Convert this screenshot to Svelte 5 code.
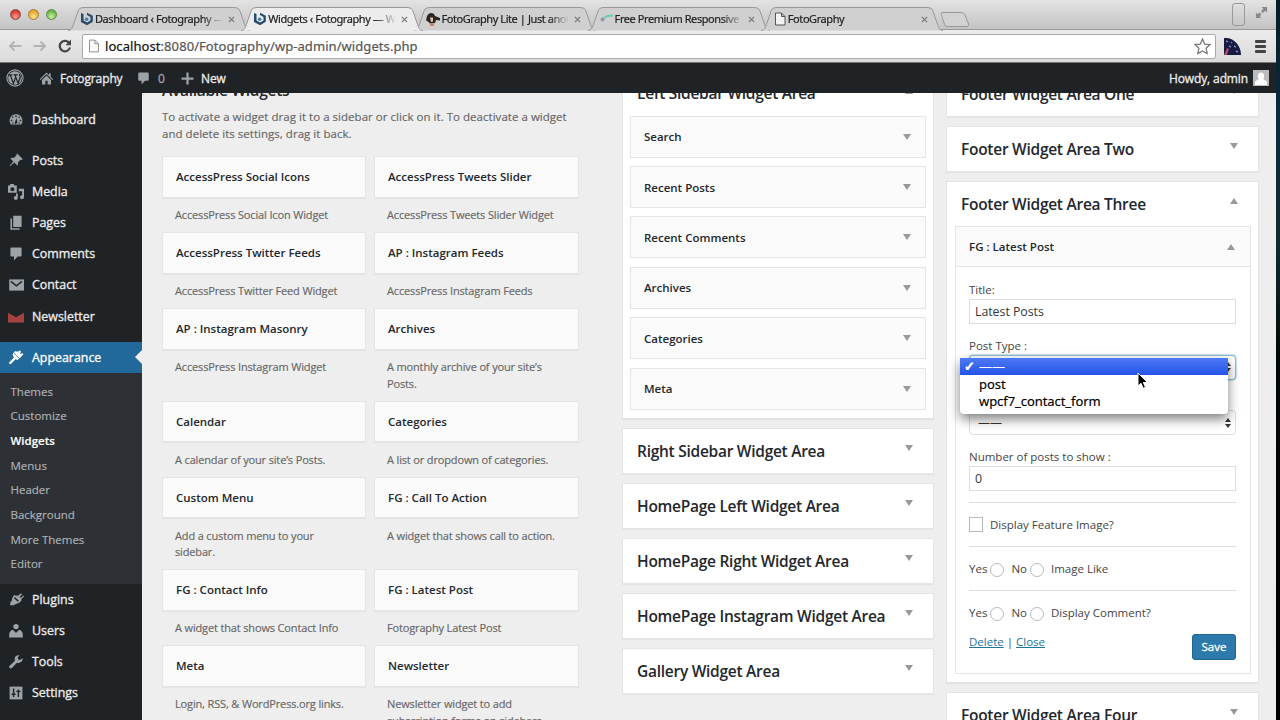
<script lang="ts">
	// Widgets screen of the WordPress admin, inside its browser window.
	const tabs = [
		{ title: 'Dashboard ‹ Fotography — W', icon: 'bit' },
		{ title: 'Widgets ‹ Fotography — Wo', icon: 'bit', active: true },
		{ title: 'FotoGraphy Lite | Just anot', icon: 'mascot' },
		{ title: 'Free Premium Responsive W', icon: 'key' },
		{ title: 'FotoGraphy', icon: 'page' }
	];

	const menuTop = ['Posts', 'Media', 'Pages', 'Comments', 'Contact', 'Newsletter'];
	const menuBottom = ['Plugins', 'Users', 'Tools', 'Settings'];
	const submenu = ['Themes', 'Customize', 'Widgets', 'Menus', 'Header', 'Background', 'More Themes', 'Editor'];

	const available = [
		['AccessPress Social Icons', 'AccessPress Social Icon Widget'],
		['AccessPress Tweets Slider', 'AccessPress Tweets Slider Widget'],
		['AccessPress Twitter Feeds', 'AccessPress Twitter Feed Widget'],
		['AP : Instagram Feeds', 'AccessPress Instagram Feeds'],
		['AP : Instagram Masonry', 'AccessPress Instagram Widget'],
		['Archives', 'A monthly archive of your site’s\nPosts.'],
		['Calendar', 'A calendar of your site’s Posts.'],
		['Categories', 'A list or dropdown of categories.'],
		['Custom Menu', 'Add a custom menu to your\nsidebar.'],
		['FG : Call To Action', 'A widget that shows call to action.'],
		['FG : Contact Info', 'A widget that shows Contact Info'],
		['FG : Latest Post', 'Fotography Latest Post'],
		['Meta', 'Login, RSS, & WordPress.org links.'],
		['Newsletter', 'Newsletter widget to add\nsubscription forms on sidebars']
	];

	const sidebarWidgets = ['Search', 'Recent Posts', 'Recent Comments', 'Archives', 'Categories', 'Meta'];
	const closedAreas = [
		'Right Sidebar Widget Area',
		'HomePage Left Widget Area',
		'HomePage Right Widget Area',
		'HomePage Instagram Widget Area',
		'Gallery Widget Area'
	];

	let title = $state('Latest Posts');
	let count = $state('0');
	let postType = $state('——');
	let menuOpen = $state(true);
	const postTypes = ['——', 'post', 'wpcf7_contact_form'];

	function pick(type: string) {
		postType = type;
		menuOpen = false;
	}
</script>

{#snippet icon(name: string)}
	<svg class="icon" viewBox="0 0 20 20" aria-hidden="true">
		{#if name === 'Dashboard'}
			<path d="M3.8 17h12.4c1.1-1.3 1.8-3 1.8-5 0-4.600-3.600-8-8-8s-8 3.500-8 8c0 2 .7 3.700 1.800 5z" />
			<path class="cut" d="M9 5.500h2v2H9zM5 7l1.600-.5.3 1.700-1.600.4zM3.500 11h2v1.800h-2zM14.500 11h2v1.800h-2zM13.600 6.700l1.400 1-1 1.500-1.200-.9zM10.800 9.500l1 4.500c.2 2-3.600 2-3.300 0l2-4.500zM5 14.500h2v1H5zM13 14.500h2v1h-2z" />
		{:else if name === 'Posts'}
			<path d="M10.400 3l1-1 6.900 6.900-1 1-1.800-.3-3.200 3.400c.5 1.500.4 2.900-.6 4L7.900 13.200 2.500 17.900 1.800 17.500 6.600 11.800 3 8.100c1.200-1 2.800-1.100 4.100-.6l3.500-3.100z" />
		{:else if name === 'Media'}
			<path fill-rule="evenodd" d="M0 2h2l1-2h4l1 2h3v9H0zM5.500 4a2.600 2.600 0 1 0 0 5.200 2.600 2.600 0 0 0 0-5.200zM13.500 6H20v10.500a2.500 2.500 0 1 1-2.300-2.500V9h-4.200zM10 12h2.200v5.500A2.500 2.500 0 1 1 10 15z" />
		{:else if name === 'Pages'}
			<path d="M6.500 1H17v14H6.500zM3 4.500h2v12h9.500v2H3z" />
		{:else if name === 'Comments'}
			<path d="M4.500 2h11A1.500 1.500 0 0 1 17 3.500v8a1.500 1.500 0 0 1-1.500 1.500H12l-4.500 5v-5h-3A1.500 1.500 0 0 1 3 11.500v-8A1.500 1.500 0 0 1 4.500 2z" />
		{:else if name === 'Contact'}
			<path d="M1.500 3H20v14H1.500z" />
			<path class="line" d="M3.500 5.500l7 5.500 7-5.500" />
		{:else if name === 'Newsletter'}
			<path fill="#a5423f" d="M0 6l10 5.500L20 6v12H0z" />
		{:else if name === 'Appearance'}
			<path d="M14.500 11.500L7 4.100 8.400 3c1.400-.9 3.500.9 5-.2l1.300-1.100 1.600 1.600-1.400 2 1.300.8 1.700-1 1.400 1.400-4.600 5zM6.500 4.600l7.400 7.400-1.700 1.700-2.700-.8-5.500 5.500c-.7.7-1.500.7-2.200 0s-.7-1.500 0-2.200l5.500-5.400-1.500-4z" />
		{:else if name === 'Plugins'}
			<path d="M13.100 4.400L16 1.500l1.500 1.500-2.900 2.900 1.400 1.500 3-3 1 1.200-3.500 3.600.5.900c-1.100 2.700-4.300 4.700-6.500 4.500L7 16.500H2.500l.7-4L5 10.500c-.2-2.800 1-5 3.500-7l1 1.200z" />
			<path class="line" d="M8 7l5 4.500" />
		{:else if name === 'Users'}
			<circle cx="10" cy="4.500" r="3.300" />
			<path d="M6 8.500l4 4 4-4c2.500.5 4.500 3 4.500 6V18h-17v-3.500c0-3 2-5.500 4.500-6z" />
		{:else if name === 'Tools'}
			<path d="M16.700 9.800c-1.500 1.400-3.600 1.800-5.400 1.100l-6.500 6.600c-.8.800-2 .8-2.700 0-.8-.7-.8-2 0-2.700l6.600-6.500C8 6.400 8.300 4.300 9.700 2.900c1.300-1.300 3.200-1.800 4.900-1.200l-2.500 2.700.8 2.500 2.400.7 2.700-2.500c.6 1.600.1 3.400-1.300 4.700z" />
		{:else if name === 'Settings'}
			<path d="M2 2h16v16H2z" />
			<path class="line" d="M7 4.500V15M4.500 11.500h5M13 5.500V15M10.500 8h5" />
		{:else if name === 'Home'}
			<path d="M10 2l3.500 3.500V3h2v4.500L19 11l-1 1-8-8-8 8-1-1zM4 12l6-6 6 6v6h-4.500v-5h-3v5H4z" />
		{:else if name === 'New'}
			<path d="M8.500 2h3v6.500H18v3h-6.500V18h-3v-6.500H2v-3h6.500z" />
		{/if}
	</svg>
{/snippet}

{#snippet favicon(name: string)}
	<svg class="favicon" viewBox="0 0 14 14" aria-hidden="true">
		{#if name === 'bit'}
			<path d="M1 1l2.500 1v6.500l3.500 2 3.500-2V5L7 3V.8l5.800 3v6L7 13.300 1 10z" fill="#274a6b" />
			<circle cx="6.600" cy="7.300" r="1.800" fill="#3981b5" />
		{:else if name === 'mascot'}
			<path d="M1 4C3 0 8 0 9 4l5 2v2.500l-4-.5-1 3-5 .5-2-2-2-1z" fill="#2c2420" />
			<path d="M4 5.500h3v4l-2 .5z" fill="#d9c4ae" />
			<path d="M4 11.500h4V14H4z" fill="#b88a72" />
		{:else if name === 'key'}
			<circle cx="2.500" cy="7.500" r="2" fill="#8d9ba0" />
			<path d="M4 6l3.500-2 5.500-.5" fill="none" stroke="#69c9b7" stroke-width="1.800" />
		{:else}
			<path d="M2.500 1h6l3.500 3.500V13H2.500zM8.500 1v3.500H12" fill="#f2f2f2" stroke="#555" />
		{/if}
	</svg>
{/snippet}

{#snippet areaHead(name: string, up = false)}
	<div class="area-head">
		<h3>{name}</h3>
		<span class="arrow" class:up></span>
	</div>
{/snippet}

<div class="desktop">
	<div class="window">
		<header class="tabstrip">
			<div class="lights"><i class="red"></i><i class="yellow"></i><i class="green"></i></div>
			<div class="tabs">
				{#each tabs as tab}
					<div class="tab" class:active={tab.active}>
						<svg class="shape" viewBox="0 0 182 24" aria-hidden="true">
							<path d="M0 23.500C4 23 4 21 6 16L10 4Q11 .5 15 .5H167Q171 .5 172 4L176 16C178 21 178 23 182 23.500" />
						</svg>
						{@render favicon(tab.icon)}
						<span class="tab-title">{tab.title}</span>
						<svg class="close" viewBox="0 0 8 8"><path d="M1 1l6 6M7 1L1 7" /></svg>
					</div>
				{/each}
				<svg class="newtab" viewBox="0 0 30 15"><path d="M1 1.500Q1 .5 3 .5H21Q24 .5 25 3L28.500 12Q29 14.500 27 14.500H8Q5 14.500 4.500 12.500z" /></svg>
			</div>
			<span class="profile"></span>
			<svg class="expand" viewBox="0 0 14 14"><path d="M7 1h6v6l-2-2-2.500 2.500-2-2L9 3zM1 7l2 2 2-2 2 2-2 2 2 2H1z" /></svg>
		</header>

		<div class="toolbar">
			<svg class="nav" viewBox="0 0 14 12"><path d="M13.500 6H2M6.500 1.500L2 6l4.500 4.500" /></svg>
			<svg class="nav" viewBox="0 0 14 12"><path d="M.5 6H12M7.500 1.500L12 6l-4.500 4.500" /></svg>
			<svg class="reload" viewBox="0 0 14 14"><path d="M11.500 4.500A5.200 5.200 0 1 0 12 8.500" /><path class="head" d="M13 .5v5.800H7.500z" /></svg>
			<div class="omnibox">
				<svg class="doc" viewBox="0 0 11 14"><path d="M.5.5h6l4 4v9H.5zM6.500.5v4h4" /></svg>
				<span class="url"><b>localhost</b>:8080/Fotography/wp-admin/widgets.php</span>
				<svg class="star" viewBox="0 0 16 16"><path d="M8 1l2.100 4.700 5 .5-3.700 3.500 1 5L8 12.200l-4.400 2.500 1-5L.9 6.200l5-.5z" /></svg>
			</div>
			<svg class="extension" viewBox="0 0 17 17">
				<path d="M0 0C9-1 17 7 17 17H0z" fill="#171b42" />
				<path d="M2 3l2 1M7 4l1 1M10 8l2 1M5 8l2 1M12 13l2 1" stroke="#6f84c8" stroke-width="1.500" />
				<path d="M0 17l3-7 2 1-2 6z" fill="#b4456b" />
			</svg>
			<div class="burger"><i></i><i></i><i></i></div>
		</div>

		<nav class="adminbar">
			<svg class="wp" viewBox="0 0 20 20">
				<circle class="ring" cx="10" cy="10" r="9" />
				<circle cx="10" cy="10" r="7.600" />
				<path d="M2.500 6.500h4.500M8.500 6.500h4.500M4.700 6.500l3.500 9.500 2.600-7M9.900 6.500l3.600 9.500 2.200-6.500c.4-1.500-.8-2.500-.8-4" />
			</svg>
			<span class="home">{@render icon('Home')}</span>
			<span class="site">Fotography</span>
			<span class="bubble">{@render icon('Comments')}</span>
			<span class="zero">0</span>
			<span class="plus">{@render icon('New')}</span>
			<span>New</span>
			<span class="howdy">Howdy, admin</span>
			<svg class="avatar" viewBox="0 0 16 16">
				<path class="back" d="M0 0h16v16H0z" />
				<path d="M8 2.500a3.300 3.700 0 0 1 2.200 6.400L14 11.500V15H2v-3.500l3.800-2.600A3.300 3.700 0 0 1 8 2.500z" />
			</svg>
		</nav>

		<div class="body">
			<aside class="menu">
				<div class="item">{@render icon('Dashboard')}Dashboard</div>
				<div class="separator"></div>
				{#each menuTop as name}
					<div class="item">{@render icon(name)}{name}</div>
				{/each}
				<div class="separator"></div>
				<div class="item current">{@render icon('Appearance')}Appearance</div>
				<ul>
					{#each submenu as name}
						<li class:on={name === 'Widgets'}>{name}</li>
					{/each}
				</ul>
				{#each menuBottom as name}
					<div class="item">{@render icon(name)}{name}</div>
				{/each}
			</aside>

			<main>
				<section class="available">
					<h3>Available Widgets</h3>
					<p class="intro">
						To activate a widget drag it to a sidebar or click on it. To deactivate a widget<br />
						and delete its settings, drag it back.
					</p>
					<div class="grid">
						{#each available as [name, text]}
							<div>
								<div class="card">{name}</div>
								<p class="desc">{text}</p>
							</div>
						{/each}
					</div>
				</section>

				<section class="column middle">
					<div class="area open">
						{@render areaHead('Left Sidebar Widget Area', true)}
						<div class="widgets">
							{#each sidebarWidgets as name}
								<div class="widget-top">{name}<span class="arrow"></span></div>
							{/each}
						</div>
					</div>
					{#each closedAreas as name}
						<div class="area">{@render areaHead(name)}</div>
					{/each}
				</section>

				<section class="column right">
					<div class="area">{@render areaHead('Footer Widget Area One')}</div>
					<div class="area">{@render areaHead('Footer Widget Area Two')}</div>
					<div class="area three">
						{@render areaHead('Footer Widget Area Three', true)}
						<div class="widget">
							<div class="widget-top">FG : Latest Post<span class="arrow up"></span></div>
							<form onsubmit={(e) => e.preventDefault()}>
								<div class="field">
									<label for="title">Title:</label>
									<input id="title" type="text" bind:value={title} />
								</div>
								<div class="field">
									<span class="label">Post Type :</span>
									<button type="button" class="select focus" onclick={() => (menuOpen = !menuOpen)}>
										<span>{menuOpen ? '' : postType}</span><span class="updown"></span>
									</button>
									{#if menuOpen}
										<div class="dropdown">
											{#each postTypes as type}
												<button type="button" class:selected={type === postType} onclick={() => pick(type)}>
													<span class="check">{type === postType ? '✓' : ''}</span>{type}
												</button>
											{/each}
										</div>
									{/if}
									<svg class="cursor" viewBox="0 0 12 18">
										<path d="M1 1v13l3-2.700 2.200 5 2.300-1-2.200-4.800h4.200z" />
									</svg>
								</div>
								<div class="field">
									<span class="label"></span>
									<button type="button" class="select">——<span class="updown"></span></button>
								</div>
								<div class="field">
									<label for="count">Number of posts to show :</label>
									<input id="count" type="text" bind:value={count} />
								</div>
								<div class="row"><i class="box"></i><span>Display Feature Image?</span></div>
								<div class="row"><span>Yes</span><i class="radio"></i><span>No</span><i class="radio"></i><span class="caption">Image Like</span></div>
								<div class="row"><span>Yes</span><i class="radio"></i><span>No</span><i class="radio"></i><span class="caption">Display Comment?</span></div>
								<div class="actions">
									<span class="links"><a href="#delete">Delete</a> | <a href="#close">Close</a></span>
									<button type="submit" class="save">Save</button>
								</div>
							</form>
						</div>
					</div>
					<div class="area">{@render areaHead('Footer Widget Area Four')}</div>
				</section>
			</main>
		</div>
	</div>
</div>

<style>
	:global(body) {
		margin: 0;
	}

	.desktop {
		width: 1280px;
		height: 720px;
		overflow: hidden;
		background: linear-gradient(#061c24 0, #0b2a40 16%, #0d2c2c 34%, #020707 50%, #000);
		font-family: 'Open Sans', 'Noto Sans', sans-serif;
		font-size: 11.5px;
		color: #23282d;
	}

	.desktop * {
		box-sizing: border-box;
	}

	.window {
		display: flex;
		flex-direction: column;
		width: 1276px;
		height: 720px;
		background: #eee;
	}

	h3,
	p,
	ul {
		margin: 0;
		padding: 0;
	}

	svg {
		flex: none;
	}

	/* browser chrome */
	.tabstrip {
		display: flex;
		flex: none;
		height: 30px;
		background: linear-gradient(#e3e3e3, #c3c3c3);
		border-bottom: 1px solid #999;
	}

	.lights {
		display: flex;
		gap: 7px;
		width: 68px;
		padding: 9px 0 0 10px;
	}

	.lights i {
		width: 11px;
		height: 11px;
		border: 1px solid #8c4a42;
		border-radius: 50%;
		background: radial-gradient(circle at 50% 75%, #ff9a8e, #d8382f 70%);
	}

	.lights .yellow {
		border-color: #a37a35;
		background: radial-gradient(circle at 50% 75%, #ffe68c, #e8a32e 70%);
	}

	.lights .green {
		border-color: #5d8a48;
		background: radial-gradient(circle at 50% 75%, #c9f2a0, #68b544 70%);
	}

	.tabs {
		display: flex;
		flex: 1;
		padding-top: 7px;
	}

	.tab {
		position: relative;
		display: flex;
		align-items: center;
		width: 182px;
		height: 24px;
		margin-right: -8.8px;
		padding-left: 12px;
		font-family: 'Noto Sans', 'Open Sans', sans-serif;
		font-size: 11px;
		letter-spacing: -0.42px;
		color: #222;
		-webkit-text-stroke: 0.2px;
	}

	.tab.active {
		z-index: 1;
	}

	.shape {
		position: absolute;
		inset: 0;
		width: 182px;
		height: 24px;
		fill: #d0d0d0;
		stroke: #999;
	}

	.active .shape {
		fill: #ececec;
	}

	.favicon {
		position: relative;
		width: 14px;
		height: 14px;
	}

	.tab-title {
		position: relative;
		top: -1px;
		width: 128px;
		margin-left: 1px;
		overflow: hidden;
		white-space: nowrap;
		-webkit-mask-image: linear-gradient(90deg, #000 84%, transparent);
		mask-image: linear-gradient(90deg, #000 84%, transparent);
	}

	.close {
		position: relative;
		width: 7px;
		height: 7px;
		margin-left: 5px;
		stroke: #777;
		stroke-width: 1.4;
	}

	.newtab {
		width: 30px;
		height: 15px;
		margin: 5px 0 0 6px;
		fill: #d2d2d2;
		stroke: #999;
	}

	.profile {
		width: 13px;
		height: 23px;
		margin-top: 3px;
		margin-right: 1px;
		border: 1px solid #999;
		border-radius: 3px;
	}

	.expand {
		width: 13px;
		height: 13px;
		margin: 6px 8px 0 9px;
		fill: #888;
	}

	.toolbar {
		display: flex;
		flex: none;
		align-items: center;
		height: 33px;
		padding-left: 8px;
		background: linear-gradient(#ececec, #dadada);
		border-bottom: 1px solid #777;
	}

	.nav {
		width: 14px;
		height: 12px;
		margin-right: 11px;
		fill: none;
		stroke: #b4b4b4;
		stroke-width: 2;
	}

	.reload {
		width: 14px;
		height: 14px;
		margin-right: 10px;
		fill: none;
		stroke: #444;
		stroke-width: 2.2;
	}

	.reload .head {
		fill: #444;
		stroke: none;
	}

	.omnibox {
		display: flex;
		align-items: center;
		width: 1134px;
		height: 25px;
		padding: 0 4px 0 6px;
		background: #fff;
		border: 1px solid #aaa;
		border-radius: 2px;
	}

	.doc {
		width: 10px;
		height: 14px;
		fill: #fafafa;
		stroke: #888;
	}

	.url {
		flex: 1;
		margin-left: 6px;
		font-family: 'Noto Sans', 'Open Sans', sans-serif;
		font-size: 13px;
		letter-spacing: 0.07px;
		color: #555;
		-webkit-text-stroke: 0.2px;
	}

	.url b {
		font-weight: 400;
		color: #111;
	}

	.star {
		width: 17px;
		height: 17px;
		fill: #fff;
		stroke: #777;
		stroke-width: 1.2;
	}

	.extension {
		width: 17px;
		height: 17px;
		margin-left: 8px;
	}

	.burger {
		display: flex;
		flex-direction: column;
		gap: 2px;
		margin-left: 14px;
	}

	.burger i {
		width: 11px;
		height: 3px;
		border-radius: 1px;
		background: #444;
	}

	/* admin bar */
	.adminbar {
		display: flex;
		flex: none;
		align-items: center;
		height: 30px;
		padding: 0 7px 0 6px;
		background: #202326;
		color: #eee;
		font-size: 12px;
		letter-spacing: -0.12px;
		-webkit-text-stroke: 0.3px;
	}

	.icon {
		width: 16px;
		height: 16px;
		fill: #9ea3a8;
	}

	.icon .cut {
		fill: #202326;
	}

	.icon .line {
		fill: none;
		stroke: #202326;
		stroke-width: 1.8;
	}

	.adminbar .icon {
		display: block;
		width: 15px;
		height: 15px;
	}

	.wp {
		width: 18px;
		height: 18px;
		margin-right: 15px;
		fill: #9ea3a8;
	}

	.wp .ring {
		fill: none;
		stroke: #9ea3a8;
		stroke-width: 1.2;
	}

	.wp path {
		fill: none;
		stroke: #202326;
		stroke-width: 1.4;
	}

	.site {
		width: 76px;
		margin-left: 6px;
	}

	.zero {
		width: 22px;
		margin-left: 7px;
		color: #9ea3a8;
	}

	.plus {
		margin-right: 6px;
	}

	.howdy {
		margin-left: auto;
	}

	.avatar {
		width: 16px;
		height: 16px;
		margin-left: 5px;
		fill: #fff;
	}

	.avatar .back {
		fill: #bbb;
	}

	.body {
		display: flex;
		flex: 1;
		min-height: 0;
		overflow: hidden;
	}

	/* side menu */
	.menu {
		flex: none;
		width: 142px;
		padding-top: 10.5px;
		background: #202326;
	}

	.item {
		position: relative;
		display: flex;
		align-items: center;
		gap: 8px;
		height: 31.15px;
		padding-left: 8px;
		color: #eee;
		font-size: 12.4px;
		-webkit-text-stroke: 0.3px;
	}

	.separator {
		height: 10.2px;
	}

	.item.current {
		background: #22699b;
		color: #fff;
	}

	.current .icon {
		fill: #fff;
	}

	.item.current::after {
		content: '';
		position: absolute;
		right: 0;
		top: 8px;
		border: 7px solid transparent;
		border-left: 0;
		border-right-color: #eee;
	}

	.menu ul {
		padding: 6.5px 0 7px;
		background: #2d3135;
		list-style: none;
	}

	.menu li {
		height: 24.7px;
		padding-left: 10.5px;
		color: #b0b3b6;
		font-size: 11.5px;
		line-height: 24.6px;
		-webkit-text-stroke: 0.15px;
	}

	.menu li.on {
		color: #fff;
		font-weight: 600;
	}

	main {
		display: flex;
		flex: 1;
		align-items: flex-start;
	}

	/* available widgets */
	.available {
		width: 417px;
		margin: -13px 43px 0 20px;
	}

	h3 {
		font-size: 15.5px;
		font-weight: 600;
		letter-spacing: -0.27px;
	}

	.available h3 {
		line-height: 20px;
	}

	.intro {
		margin-top: 8px;
		line-height: 17.2px;
		letter-spacing: 0.03px;
		color: #666;
		white-space: nowrap;
		-webkit-text-stroke: 0.15px;
	}

	.grid {
		display: grid;
		grid-template-columns: 204px 205px;
		column-gap: 8px;
		margin-top: 13.8px;
	}

	.card {
		height: 41.6px;
		padding-left: 13px;
		background: #fafafa;
		border: 1px solid #e5e5e5;
		box-shadow: 0 1px 1px rgba(0, 0, 0, 0.04);
		font-weight: 600;
		line-height: 40.6px;
	}

	.desc {
		padding: 9.3px 0 8.5px 13px;
		color: #666;
		font-size: 11px;
		letter-spacing: -0.15px;
		line-height: 16.6px;
		white-space: pre;
		-webkit-text-stroke: 0.15px;
	}

	/* sidebars */
	.column {
		display: flex;
		flex: none;
		flex-direction: column;
		gap: 9px;
		width: 312px;
	}

	.middle {
		margin: -22.4px 12px 0 0;
	}

	.right {
		width: 313px;
		margin-top: -22px;
	}

	.area {
		background: #fff;
		border: 1px solid #e5e5e5;
		box-shadow: 0 1px 1px rgba(0, 0, 0, 0.04);
	}

	.area-head {
		display: flex;
		align-items: center;
		justify-content: space-between;
		height: 44px;
		padding: 0 20px 1px 14px;
	}

	.arrow {
		width: 0;
		border: 4px solid transparent;
		border-top: 6px solid #999;
		border-bottom: 0;
	}

	.arrow.up {
		border-top: 0;
		border-bottom: 6px solid #999;
	}

	.area-head .arrow {
		margin-bottom: 5px;
	}

	.widgets {
		display: flex;
		flex-direction: column;
		gap: 8.4px;
		padding: 0 7px 8.6px;
	}

	.widget-top {
		display: flex;
		align-items: center;
		justify-content: space-between;
		height: 42px;
		padding: 0 14px 0 13px;
		background: #fafafa;
		border: 1px solid #e5e5e5;
		font-weight: 600;
	}

	/* open widget form */
	.three {
		height: 502px;
	}

	.widget {
		height: 448px;
		margin: 0 7px 0 8px;
		border: 1px solid #e5e5e5;
	}

	.widget .widget-top {
		height: 40px;
		padding-right: 15px;
		border-width: 0 0 1px;
	}

	form {
		padding: 14px 14px 0 13px;
		color: #444;
	}

	.field {
		position: relative;
		height: 43.5px;
		margin-bottom: 12.1px;
	}

	.field label,
	.label {
		display: block;
		height: 18px;
		line-height: 17px;
	}

	.field input,
	.select {
		display: flex;
		align-items: center;
		justify-content: space-between;
		width: 100%;
		height: 25px;
		padding: 0 5px;
		background: #fff;
		border: 1px solid #ddd;
		font: inherit;
		font-size: 12.4px;
		letter-spacing: -0.05px;
		color: #32373c;
	}

	.select {
		padding: 0 4px 0 8px;
		border-radius: 4px;
		font-size: 12px;
	}

	.select.focus {
		border-color: #8fb8d2;
		box-shadow: 0 0 2px rgba(30, 140, 190, 0.8);
	}

	.updown::before,
	.updown::after {
		content: '';
		display: block;
		border: 3px solid transparent;
		border-top: 0;
		border-bottom: 4px solid #333;
	}

	.updown::after {
		margin-top: 2px;
		border-top: 4px solid #333;
		border-bottom: 0;
	}

	.dropdown {
		position: absolute;
		z-index: 2;
		left: -9px;
		top: 21px;
		width: 268px;
		height: 56px;
		background: #fff;
		border-radius: 0 0 4px 4px;
		box-shadow: 0 5px 12px rgba(0, 0, 0, 0.5);
	}

	.dropdown button {
		display: flex;
		align-items: center;
		width: 100%;
		height: 17.5px;
		padding: 0;
		border: 0;
		background: none;
		font-family: 'Noto Sans', sans-serif;
		font-size: 13px;
		letter-spacing: -0.07px;
		color: #000;
		-webkit-text-stroke: 0.15px;
	}

	.dropdown .selected {
		background: linear-gradient(#4d79f5, #2454e8);
		color: #fff;
	}

	.check {
		width: 19px;
		font-weight: 700;
		text-align: center;
	}

	.cursor {
		position: absolute;
		z-index: 3;
		left: 168px;
		top: 35px;
		width: 12px;
		height: 18px;
		fill: #000;
		stroke: #fff;
	}

	.row {
		display: flex;
		align-items: center;
		height: 44px;
		border-top: 1px solid #ddd;
	}

	.field + .row {
		margin-top: -1px;
	}

	.box {
		width: 14px;
		height: 15px;
		margin-right: 7px;
		border: 1px solid #b4b9be;
	}

	.radio {
		width: 14px;
		height: 14px;
		margin: 2px 7px 0 3px;
		border: 1px solid #b4b9be;
		border-radius: 50%;
	}

	.actions {
		display: flex;
		justify-content: space-between;
		margin-top: -0.5px;
	}

	.links {
		color: #444;
	}

	a {
		color: #21759b;
	}

	.save {
		width: 44px;
		height: 26px;
		padding: 0;
		border: 1px solid #206694;
		border-radius: 3px;
		background: #2b7aab;
		color: #fff;
		font: inherit;
		-webkit-text-stroke: 0.3px;
	}
</style>
